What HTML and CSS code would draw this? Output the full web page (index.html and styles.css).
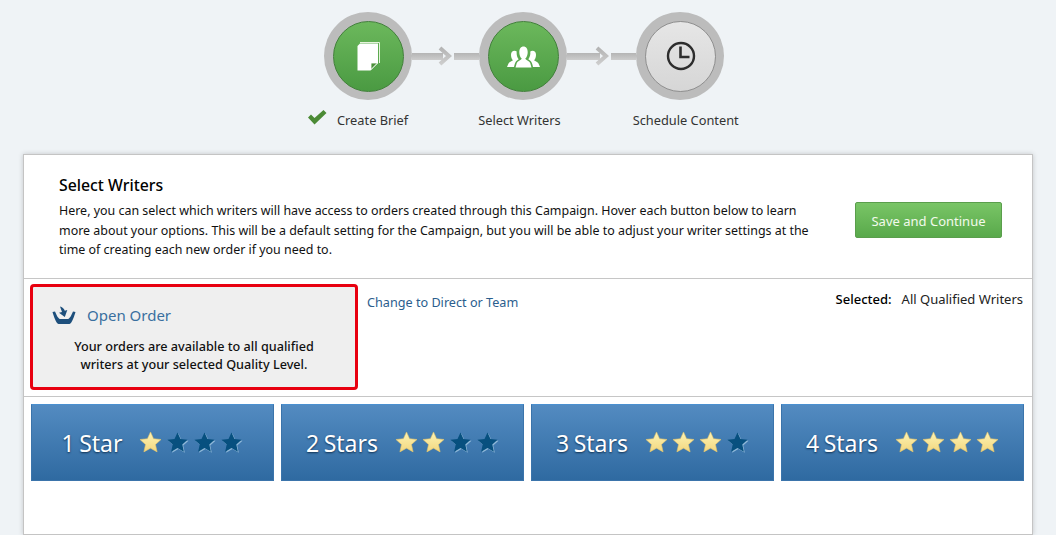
FILE: index.html
```html
<!DOCTYPE html>
<html lang="en">
<head>
<meta charset="utf-8">
<title>Select Writers</title>
<link rel="stylesheet" href="styles.css">
</head>
<body>
<svg class="defs" width="0" height="0" aria-hidden="true">
  <defs>
    <linearGradient id="gold" x1="0" y1="0" x2="0" y2="1">
      <stop offset="0" stop-color="#fdf3b4"/>
      <stop offset="1" stop-color="#f3d77f"/>
    </linearGradient>
    <linearGradient id="shaftfill" x1="0" y1="0" x2="0" y2="1">
      <stop offset="0" stop-color="#b4b4b4"/>
      <stop offset="1" stop-color="#cdcdcd"/>
    </linearGradient>
    <symbol id="star-on" viewBox="0 0 24 24">
      <path d="M12 1l3.200 7 7.800.9-5.800 5.200 1.700 7.700L12 17.900l-6.900 3.900 1.700-7.700L1 8.900 8.800 8z" fill="url(#gold)" stroke="#e5c468" stroke-width=".6"/>
    </symbol>
    <symbol id="star-off" viewBox="0 0 24 24">
      <path d="M13 2.500l3.100 6.900 7.400.8-5.500 5 1.600 7.400-6.600-3.800-6.600 3.800 1.600-7.400-5.500-5 7.400-.8z" fill="#8fb8d8"/>
      <path d="M12 1.500l3.100 6.900 7.400.8-5.500 5 1.600 7.400L12 17.800l-6.600 3.800L7 14.200l-5.500-5 7.400-.8z" fill="#07507f"/>
    </symbol>
  </defs>
</svg>

<header class="stepper">
  <div class="track">
    <div class="circle done">
      <svg class="ic" width="23" height="29" viewBox="0 0 23 29">
        <path d="M3 .5H22.500V21" fill="none" stroke="#e6f3dc" stroke-width="1"/>
        <path d="M3 1.500H21V21l-7.500 7.500H.5V4z" fill="#fff"/>
        <path d="M14 27.500v-6.500h6.500z" fill="#4b8f3a" stroke="#fff" stroke-width=".8"/>
      </svg>
    </div>
    <div class="link"><span class="shaft"></span><svg class="head" width="16" height="20" viewBox="0 0 16 20"><path d="M2 2l9 8-9 8" fill="none" stroke="url(#shaftfill)" stroke-width="4"/></svg><span class="shaft short"></span></div>
    <div class="circle done">
      <svg class="ic people" width="33" height="22" viewBox="0 0 33 22">
        <path d="M0 21l1.500-3.500c.7-1.500 3-2 4.500-3.200C4.500 13 4 11 4 8.800 4 6.300 5.500 4.800 7.500 4.800c.9 0 1.600.3 2.200.8-.3 3 .4 5.800 2 7.700l-1.700 1.100C8.500 15.500 7.500 18 7 21z" fill="#fff"/>
        <path d="M33 21l-1.500-3.500c-.7-1.500-3-2-4.500-3.200C28.500 13 29 11 29 8.800c0-2.500-1.500-4-3.500-4-.9 0-1.600.3-2.200.8.300 3-.4 5.800-2 7.700l1.700 1.100c1.500 1.100 2.500 3.600 3 6.600z" fill="#fff"/>
        <path d="M8.500 21.500l1.300-4.500c.6-1.800 4-2.800 5-4.200-1.700-1.800-2.500-4-2.500-6.600C12.300 2.600 14 .5 16.500.5s4.200 2.100 4.200 5.700c0 2.600-.8 4.800-2.500 6.600 1 1.400 4.400 2.400 5 4.200l1.300 4.500z" fill="#fff"/>
      </svg>
    </div>
    <div class="link wide"><span class="shaft"></span><svg class="head" width="16" height="20" viewBox="0 0 16 20"><path d="M2 2l9 8-9 8" fill="none" stroke="url(#shaftfill)" stroke-width="4"/></svg><span class="shaft short"></span></div>
    <div class="circle todo">
      <svg class="ic" width="30" height="30" viewBox="0 0 30 30">
        <circle cx="15" cy="15" r="13" fill="none" stroke="#2d2d2d" stroke-width="2.400"/>
        <path d="M14.500 5.500v10.500h9" fill="none" stroke="#2d2d2d" stroke-width="2.600"/>
      </svg>
    </div>
  </div>
  <div class="labels">
    <svg class="check" width="20" height="16" viewBox="0 0 20 16"><path d="M1 8.500l3-3 3.500 3.500L16.500 1 19.500 4 7.500 15.500z" fill="#4b8a35"/></svg>
    <span class="label l1">Create Brief</span>
    <span class="label l2">Select Writers</span>
    <span class="label l3">Schedule Content</span>
  </div>
</header>

<main class="card">
  <section class="intro">
    <div class="intro-text">
      <h1>Select Writers</h1>
      <p>Here, you can select which writers will have access to orders created through this Campaign. Hover each button below to learn<br>more about your options. This will be a default setting for the Campaign, but you will be able to adjust your writer settings at the<br>time of creating each new order if you need to.</p>
    </div>
    <button class="save">Save and Continue</button>
  </section>

  <section class="type-row">
    <div class="type-box">
      <div class="type-head">
        <svg width="24" height="18" viewBox="0 0 24 18">
          <path d="M.5 6L3 5.500C4.500 9 6 12.500 8 13H16C18 12.500 19.500 9 21 5.500L23.500 6C22.200 10 20 17.500 17.500 18H6.500C4 17.500 1.800 10 .5 6z" fill="#1d4f7c"/>
          <path d="M8 .5c2 .5 4.200 1.800 4.800 4.300L15.300 4 12.800 11 7 6.700 10 6C9.500 4 8.500 2.200 8 .5z" fill="#1d4f7c"/>
        </svg>
        <span>Open Order</span>
      </div>
      <p>Your orders are available to all qualified<br>writers at your selected Quality Level.</p>
    </div>
    <a class="change" href="#">Change to Direct or Team</a>
    <div class="selected"><b>Selected:</b><span>All Qualified Writers</span></div>
  </section>

  <section class="tiles">
    <div class="tile"><span class="tile-name">1 Star</span><span class="stars"><svg><use href="#star-on"/></svg><svg><use href="#star-off"/></svg><svg><use href="#star-off"/></svg><svg><use href="#star-off"/></svg></span></div>
    <div class="tile"><span class="tile-name">2 Stars</span><span class="stars"><svg><use href="#star-on"/></svg><svg><use href="#star-on"/></svg><svg><use href="#star-off"/></svg><svg><use href="#star-off"/></svg></span></div>
    <div class="tile"><span class="tile-name">3 Stars</span><span class="stars"><svg><use href="#star-on"/></svg><svg><use href="#star-on"/></svg><svg><use href="#star-on"/></svg><svg><use href="#star-off"/></svg></span></div>
    <div class="tile"><span class="tile-name">4 Stars</span><span class="stars"><svg><use href="#star-on"/></svg><svg><use href="#star-on"/></svg><svg><use href="#star-on"/></svg><svg><use href="#star-on"/></svg></span></div>
  </section>
</main>
</body>
</html>
```

FILE: styles.css
```css
* { box-sizing: border-box; }
html, body { height: 535px; overflow: hidden; }
body {
  margin: 0;
  background: #eff3f6;
  font-family: "Noto Sans", "Open Sans", sans-serif;
  color: #111;
}
.defs { position: absolute; }

.stepper { height: 154px; padding: 12px 0 0 307px; }
.track { display: flex; align-items: center; margin-left: 17px; height: 88px; }
.circle {
  width: 88px; height: 88px; flex: none;
  border-radius: 50%;
  background: #bcbcbc;
  display: flex; align-items: center; justify-content: center;
  position: relative; z-index: 0;
}
.circle .ic { display: block; margin-left: 1px; }
.circle .people { margin-top: 2px; }
.circle::before {
  content: ""; position: absolute; inset: 9px 8px 8px 9px; border-radius: 50%; z-index: -1;
}
.circle.done::before {
  background: linear-gradient(#6cb85c, #4a9a42);
  border: 1px solid #41803a;
}
.circle.todo::before {
  background: linear-gradient(#e6e6e6, #d6d6d6);
  border: 1px solid #8f8f8f;
}
.link { width: 67px; display: flex; align-items: center; }
.link.wide { width: 69px; }
.shaft { flex: 1; height: 7px; background: linear-gradient(#b4b4b4, #cdcdcd); }
.shaft.short { flex: none; width: 25px; }
.head { flex: none; margin: 0 0 0 -5px; }

.labels { display: flex; align-items: center; height: 24px; margin-top: 8px; font-size: 12.800px; color: #333; }
.check { flex: none; margin-top: -6px; }
.label { white-space: nowrap; }
.l1 { margin-left: 10px; }
.l2 { margin-left: 70px; }
.l3 { margin-left: 72px; }

.card {
  width: 1010px; height: 381px; margin-left: 23px;
  background: #fff;
  border: 1px solid #c4c4c4;
  box-shadow: 0 0 5px rgba(0,0,0,.18);
}
.intro {
  height: 124px;
  padding: 20px 30px 0 35px;
  display: flex; justify-content: space-between; align-items: flex-start;
  border-bottom: 1px solid #c6c6c6;
}
.intro h1 { margin: 0 0 6px; font-size: 15.800px; line-height: 20px; font-weight: 500; color: #000; }
.intro p { margin: 0; font-size: 12.450px; line-height: 19.500px; color: #111; white-space: nowrap; }
.save {
  flex: none; width: 147px; height: 36px; margin-top: 27px;
  border: 1px solid #5a9e4c; border-radius: 2px;
  background: linear-gradient(#79c566, #59a94b);
  color: #f2faec; font: 13px "Noto Sans", sans-serif;
  padding: 1px 0 0;
}

.type-row {
  height: 118px; padding: 5px 8px 0 6px;
  display: flex; align-items: flex-start;
  border-bottom: 1px solid #c6c6c6;
}
.type-box {
  width: 328px; height: 106px; flex: none;
  background: #efefef;
  border: 3px solid #e8000f; border-radius: 4px;
  padding: 18px 0 0 19px;
}
.type-head { display: flex; align-items: center; gap: 11px; color: #3a6f9f; font-size: 15px; line-height: 20px; }
.type-box p { margin: 12px 0 0 -19px; text-align: center; font-size: 12.650px; line-height: 18px; font-weight: 500; color: #111; }
.change { margin: 9px 0 0 9px; font-size: 12.650px; line-height: 18px; color: #2b5e8e; text-decoration: none; }
.selected { margin: 6px 1px 0 auto; font-size: 13px; line-height: 18px; display: flex; gap: 10px; color: #222; }
.selected b { font-weight: 500; color: #000; }

.tiles { display: flex; gap: 7px; padding: 7px 8px 0 7px; }
.tile {
  width: 243px; height: 77px; flex: none;
  display: flex; align-items: center; justify-content: center; gap: 17px;
  background: linear-gradient(#538bc1, #2f6aa1);
  border: 1px solid #3b74ab;
  border-top-color: #4a90d0;
}
.tile-name { color: #fff; font-size: 23px; word-spacing: -1.500px; padding-top: 1px; text-shadow: 0 1px 2px #0f3050; }
.stars { display: flex; gap: 4px; }
.stars svg { width: 23px; height: 23px; display: block; }
```
